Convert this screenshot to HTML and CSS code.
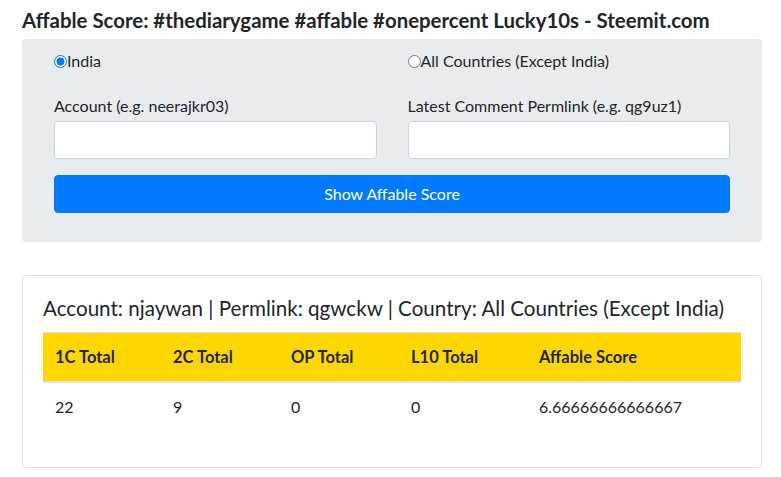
FILE: index.html
```html
<!DOCTYPE html>
<html lang="en">
<head>
<meta charset="utf-8">
<title>Affable Score</title>
<link rel="stylesheet" href="styles.css">
</head>
<body>
<main class="page">
  <h5 class="title">Affable Score: #thediarygame #affable #onepercent Lucky10s - Steemit.com</h5>
  <form class="panel">
    <div class="row">
      <div class="col">
        <label class="radio"><input type="radio" name="country" checked>India</label>
      </div>
      <div class="col">
        <label class="radio"><input type="radio" name="country">All Countries (Except India)</label>
      </div>
    </div>
    <div class="row fields">
      <div class="col">
        <label class="field-label">Account (e.g. neerajkr03)</label>
        <input class="input" type="text">
      </div>
      <div class="col">
        <label class="field-label">Latest Comment Permlink (e.g. qg9uz1)</label>
        <input class="input" type="text">
      </div>
    </div>
    <button class="btn" type="button">Show Affable Score</button>
  </form>

  <section class="card">
    <h5 class="card-title">Account: njaywan | Permlink: qgwckw | Country: All Countries (Except India)</h5>
    <table class="table">
      <thead>
        <tr>
          <th class="c1">1C Total</th>
          <th class="c2">2C Total</th>
          <th class="c3">OP Total</th>
          <th class="c4">L10 Total</th>
          <th class="c5">Affable Score</th>
        </tr>
      </thead>
      <tbody>
        <tr>
          <td>22</td>
          <td>9</td>
          <td>0</td>
          <td>0</td>
          <td>6.66666666666667</td>
        </tr>
      </tbody>
    </table>
  </section>
</main>
</body>
</html>
```
FILE: styles.css
```css
* { box-sizing: border-box; }
html, body { margin: 0; padding: 0; background: #fff; }
body {
  font-family: Lato, "Noto Sans", sans-serif;
  font-size: 16px;
  line-height: 24px;
  color: #212529;
}
.page {
  padding: 8px 19px 0 22px;
}
.title {
  margin: 0 0 7px;
  font-size: 20.4px;
  line-height: 24px;
  font-weight: 700;
}
.panel {
  background: #e9ecef;
  border-radius: 4px;
  padding: 10px 32px 29px;
  margin: 0 0 33px;
}
.row {
  display: flex;
  gap: 31px;
}
.col {
  flex: 1 1 0;
  min-width: 0;
}
.radio {
  display: flex;
  align-items: center;
  height: 24px;
}
.radio input {
  margin: 0;
  width: 13px;
  height: 13px;
}
.fields {
  margin-top: 21px;
}
.field-label {
  display: block;
  margin-bottom: 3px;
}
.input {
  display: block;
  width: 100%;
  height: 38px;
  border: 1px solid #ced4da;
  border-radius: 4px;
  background: #fff;
  font: inherit;
}
.btn {
  display: block;
  width: 100%;
  height: 38px;
  margin-top: 16px;
  border: 1px solid #007bff;
  border-radius: 4px;
  background: #007bff;
  color: #fff;
  font: inherit;
  cursor: pointer;
}
.card {
  border: 1px solid #dfdfdf;
  border-radius: 4px;
  padding: 20px 20px 20px;
}
.card-title {
  margin: 0 0 12px;
  font-size: 20.6px;
  line-height: 24px;
  font-weight: 400;
}
.table {
  width: 100%;
  border-collapse: collapse;
  margin-bottom: 16px;
}
.table th, .table td {
  text-align: left;
  padding: 12px;
  vertical-align: top;
}
.table th {
  background: #ffd700;
  font-size: 16.5px;
  font-weight: 700;
  border-top: 1px solid #dee2e6;
  border-bottom: 2px solid #dee2e6;
}
.table td {
  border-top: 1px solid #dee2e6;
}
.c1 { width: 118px; }
.c2 { width: 118px; }
.c3 { width: 120px; }
.c4 { width: 128px; }
```
